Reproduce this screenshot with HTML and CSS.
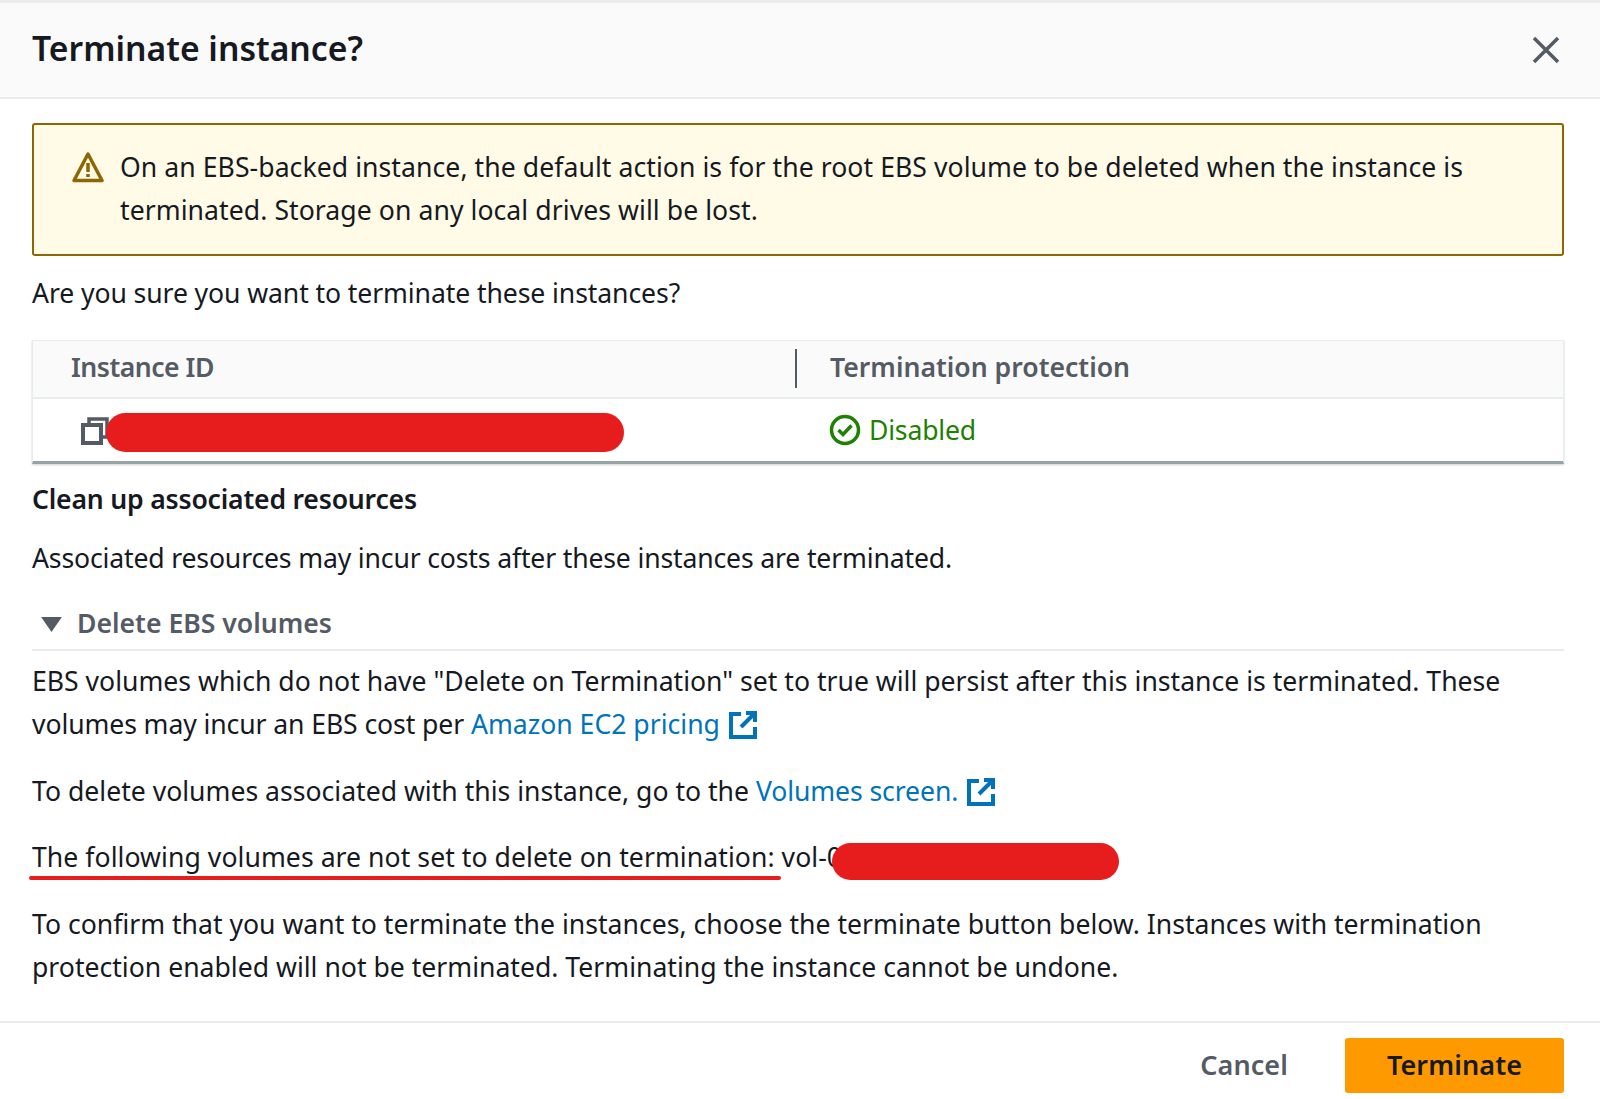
FILE: index.html
```html
<!DOCTYPE html>
<html lang="en">
<head>
<meta charset="utf-8">
<title>Terminate instance?</title>
<link rel="stylesheet" href="styles.css">
</head>
<body>
<div class="modal">
  <header class="modal-header">
    <h1 class="title">Terminate instance?</h1>
    <button class="close" aria-label="Close">
      <svg viewBox="0 0 28 28" width="28" height="28"><path d="M2 2 L26 26 M26 2 L2 26" fill="none" stroke="#545b64" stroke-width="3.500"/></svg>
    </button>
  </header>
  <main class="content">
    <div class="alert">
      <svg class="alert-icon" viewBox="0 0 32 32" width="32" height="32"><path d="M16 3 L30 29.500 H2 Z" fill="none" stroke="#8d6605" stroke-width="3.500" stroke-linejoin="round"/><path d="M16 12 V21 M16 23 V26" fill="none" stroke="#8d6605" stroke-width="3.500"/></svg>
      <p class="alert-text">On an EBS-backed instance, the default action is for the root EBS volume to be deleted when the instance is terminated. Storage on any local drives will be lost.</p>
    </div>
    <p class="confirm">Are you sure you want to terminate these instances?</p>
    <div class="table">
      <div class="thead">
        <div class="th th-id">Instance ID</div>
        <div class="th th-prot">Termination protection</div>
      </div>
      <div class="trow">
        <div class="td td-id">
          <svg class="copy" viewBox="0 0 28 28" width="28" height="28"><path d="M8 7 V2 H26 V20 H20" fill="none" stroke="#545b64" stroke-width="3.500"/><rect x="2" y="8" width="18" height="18" fill="none" stroke="#545b64" stroke-width="4"/></svg>
          <span class="redact redact-id"></span>
        </div>
        <div class="td td-prot">
          <svg class="ok" viewBox="0 0 32 32" width="32" height="32"><circle cx="16" cy="16" r="13.500" fill="none" stroke="#1d8102" stroke-width="3.500"/><path d="M9.500 16 L14 20.500 L22.500 11.500" fill="none" stroke="#1d8102" stroke-width="3.500"/></svg>
          <span class="status">Disabled</span>
        </div>
      </div>
    </div>
    <h2 class="subhead">Clean up associated resources</h2>
    <p class="assoc">Associated resources may incur costs after these instances are terminated.</p>
    <div class="expander">
      <svg class="caret" viewBox="0 0 22 18" width="21" height="17"><path d="M0 1 H22 L11 17 Z" fill="#545b64"/></svg>
      <span class="expander-label">Delete EBS volumes</span>
    </div>
    <p class="para p-ebs">EBS volumes which do not have "Delete on Termination" set to true will persist after this instance is terminated. These <span class="tight">volumes may incur an EBS cost per </span><a class="link">Amazon EC2 pricing</a><svg class="ext" viewBox="0 0 28 28" width="28" height="28"><path d="M12 3 H2 V26 H26 V16 M17 2 H26 V11 M26 2 L12 16" fill="none" stroke="#0073bb" stroke-width="4"/></svg></p>
    <p class="para p-del">To delete volumes associated with this instance, go to the <a class="link link-vol">Volumes screen.</a><svg class="ext" viewBox="0 0 28 28" width="28" height="28"><path d="M12 3 H2 V26 H26 V16 M17 2 H26 V11 M26 2 L12 16" fill="none" stroke="#0073bb" stroke-width="4"/></svg></p>
    <p class="para p-vol"><span class="marked">The following volumes are not set to delete on termination:</span> vol-0<span class="redact redact-vol"></span></p>
    <p class="para p-end">To confirm that you want to terminate the instances, choose the terminate button below. Instances with termination protection enabled will not be terminated. Terminating the instance cannot be undone.</p>
  </main>
  <footer class="footer">
    <button class="btn-cancel">Cancel</button>
    <button class="btn-primary">Terminate</button>
  </footer>
</div>
</body>
</html>
```
FILE: styles.css
```css
* { box-sizing: border-box; }
html, body { margin: 0; padding: 0; background: #fff; }
body { font-family: "Noto Sans", sans-serif; font-size: 26.6px; line-height: 43px; color: #16191f; }
p, h1, h2 { margin: 0; }
.modal { width: 1600px; height: 1099px; display: flex; flex-direction: column; overflow: hidden; }
.modal-header { height: 99px; flex: none; background: #fafafa; border-top: 3px solid #e9ebed; border-bottom: 2px solid #e9ebed; display: flex; align-items: center; justify-content: space-between; padding: 0 40px 0 32px; }
.title { font-size: 33.7px; font-weight: 600; line-height: 40px; margin-bottom: 5px; }
.close { width: 28px; height: 28px; padding: 0; border: 0; background: none; display: block; }
.close svg { display: block; }
.content { flex: 1; padding: 24px 36px 0 32px; }
.alert { height: 133px; background: #fffbe6; border: 2px solid #8d6605; border-radius: 3px; display: flex; padding: 21px 60px 0 38px; gap: 16px; }
.alert-text { letter-spacing: .06px; }
.alert-icon { flex: none; margin-top: 5px; }
.confirm { margin-top: 16px; letter-spacing: -.1px; }
.table { margin-top: 25px; height: 124px; border: 1px solid #eaeded; border-bottom: 3px solid #95a5a6; box-shadow: 0 1px 2px rgba(0,28,36,.2); }
.thead { height: 58px; background: #fafafa; border-bottom: 2px solid #eaeded; display: flex; align-items: center; padding-bottom: 2px; }
.th { font-weight: 600; color: #545b64; }
.th-id { width: 764px; padding-left: 38px; height: 39px; border-right: 2px solid #545b64; line-height: 37px; letter-spacing: -.5px; }
.th-prot { padding-left: 33px; margin-bottom: 2px; }
.trow { height: 62px; display: flex; align-items: center; }
.td-id { width: 764px; padding-left: 48px; position: relative; height: 62px; display: flex; align-items: center; }
.td-prot { padding-left: 32px; display: flex; align-items: center; gap: 8px; }
.copy { display: block; margin-top: 2px; }
.redact { position: absolute; background: #e71d1d; border-radius: 20px; }
.redact-id { left: 73px; top: 14px; width: 518px; height: 39px; }
.status { color: #1d8102; letter-spacing: -.2px; }
.subhead { font-size: 26.6px; font-weight: 600; line-height: 43px; margin-top: 14px; letter-spacing: -.2px; }
.assoc { margin-top: 16px; letter-spacing: -.16px; }
.expander { margin-top: 21px; height: 44px; display: flex; align-items: center; gap: 15px; padding-left: 9px; }
.expander-label { font-weight: 600; color: #545b64; }
.caret { display: block; margin-top: 2px; }
.para { margin-top: 0; }
.p-ebs { border-top: 2px solid #e9ebed; margin-top: 4px; padding-top: 9px; }
.tight { letter-spacing: -.1px; }
.link { color: #0073bb; }
.link-vol { letter-spacing: -.1px; }
.ext { vertical-align: -5px; margin-left: 9px; }
.p-del, .p-end { margin-top: 24px; }
.p-vol { margin-top: 23px; position: relative; letter-spacing: .05px; }
.marked { position: relative; }
.marked::after { content: ""; position: absolute; left: -3px; right: -6px; bottom: -5px; height: 4.500px; background: #e71d1d; border-radius: 2px; }
.redact-vol { left: 800px; top: 7px; width: 287px; height: 37px; }
.footer { flex: none; height: 78px; border-top: 2px solid #e9ebed; display: flex; justify-content: flex-end; align-items: flex-start; padding: 15px 36px 0 0; gap: 57px; }
.btn-cancel, .btn-primary { font: 600 27px/43px "Noto Sans", sans-serif; border: 0; padding: 0 0 2px; background: none; letter-spacing: .1px; }
.btn-cancel { color: #545b64; height: 55px; }
.btn-primary { width: 219px; height: 55px; background: #ff9900; border-radius: 3px; color: #16191f; }
```
